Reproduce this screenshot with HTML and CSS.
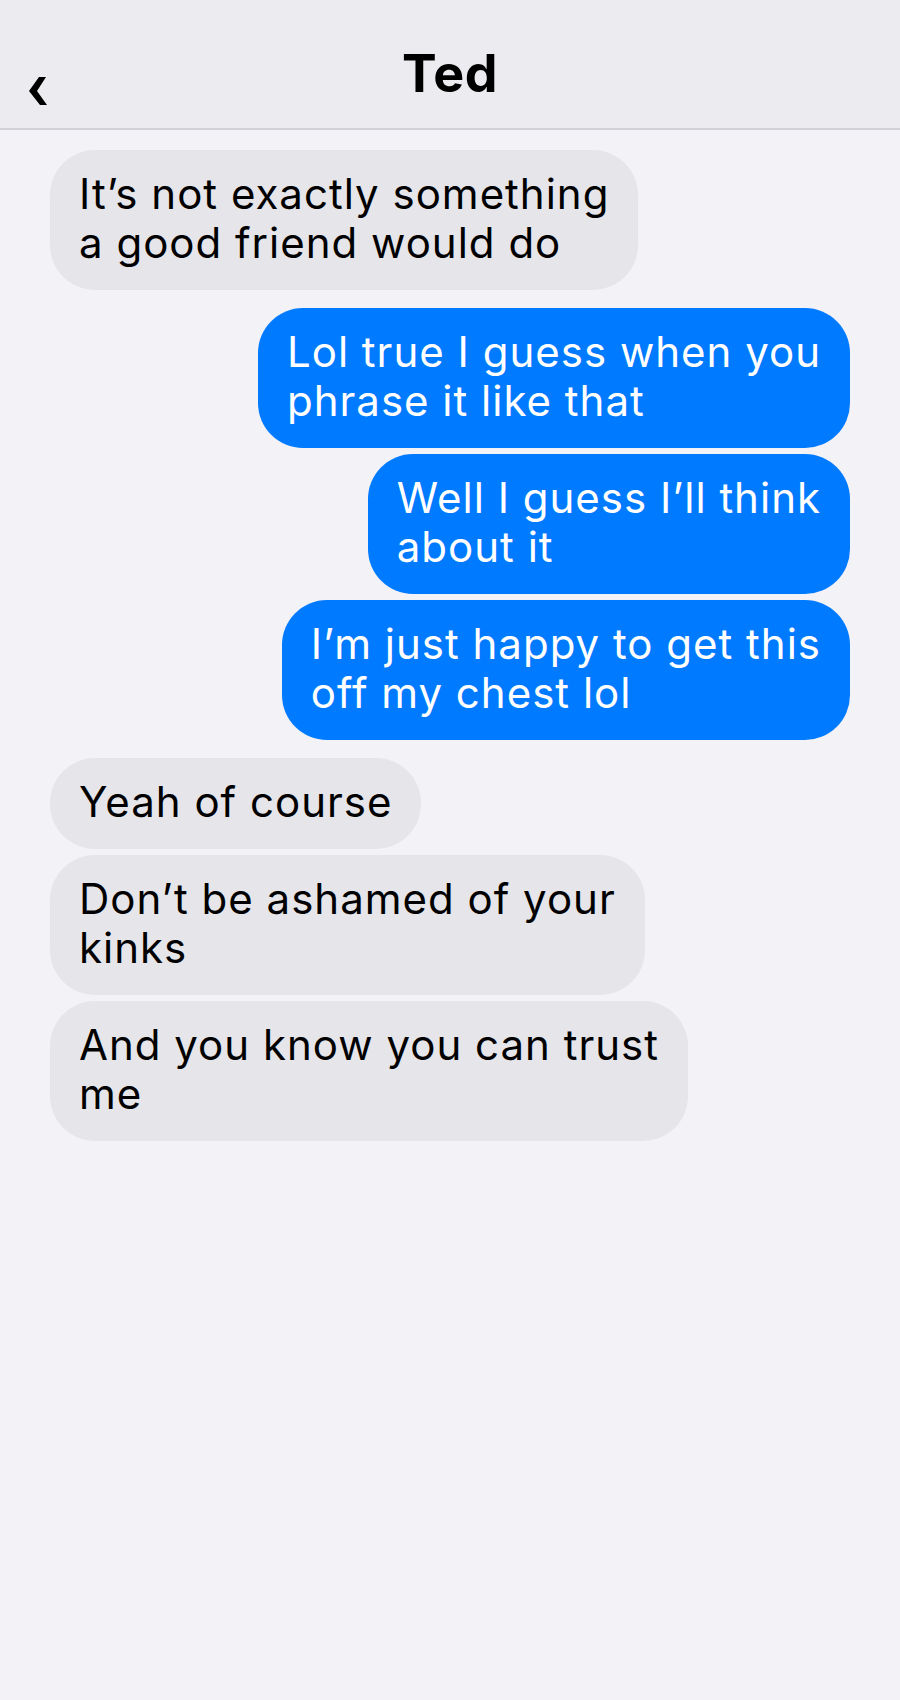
FILE: index.html
```html
<!DOCTYPE html>
<html lang="en">
<head>
    <meta charset="UTF-8">
    <meta name="viewport" content="width=device-width, initial-scale=1.0">
    <title>Ted</title>
    <link rel="stylesheet" href="styles.css">
</head>
<body>
    <header class="nav-bar">
        <a class="back" href="#">
            <svg width="24" height="30" viewBox="0 0 24 30">
                <polygon points="20,1 13,1 3,15 14,29 21,29 11,15" fill="#000"/>
            </svg>
        </a>
        <h1 class="title">Ted</h1>
        <span></span>
    </header>

    <main class="thread">
        <div class="group received">
            <div class="bubble">It’s not exactly something<br>a good friend would do</div>
        </div>

        <div class="group sent">
            <div class="bubble">Lol true I guess when you<br>phrase it like that</div>
            <div class="bubble">Well I guess I’ll think<br>about it</div>
            <div class="bubble">I’m just happy to get this<br>off my chest lol</div>
        </div>

        <div class="group received">
            <div class="bubble">Yeah of course</div>
            <div class="bubble">Don’t be ashamed of your<br>kinks</div>
            <div class="bubble">And you know you can trust<br>me</div>
        </div>
    </main>
</body>
</html>
```

FILE: styles.css
```css
body {
    margin: 0;
    min-height: 1700px;
    background-color: #f2f2f7;
    font-family: Inter, "Noto Sans", sans-serif;
    color: #000;
}

.nav-bar {
    display: grid;
    grid-template-columns: 1fr auto 1fr;
    align-items: end;
    height: 130px;
    box-sizing: border-box;
    padding: 0 26px 28px;
    background-color: #ebebf0;
    border-bottom: 2px solid #d1d0d6;
}

.back {
    display: block;
    width: 24px;
    height: 30px;
    margin-bottom: -6px;
}

.back svg {
    display: block;
}

.title {
    margin: 0;
    font-size: 52px;
    line-height: 52px;
    font-weight: 700;
    letter-spacing: 0.5px;
}

.thread {
    display: flex;
    flex-direction: column;
    gap: 18px;
    padding: 20px 50px;
}

.group {
    display: flex;
    flex-direction: column;
    gap: 6px;
}

.group.received {
    align-items: flex-start;
}

.group.sent {
    align-items: flex-end;
}

.bubble {
    padding: 19px 29px 23px 29px;
    font-size: 42px;
    line-height: 49px;
    letter-spacing: 1px;
    border-radius: 45px;
    white-space: nowrap;
}

.received .bubble {
    background-color: #e5e5ea;
    color: #000;
}

.sent .bubble {
    background-color: #007aff;
    color: #fff;
}
```
